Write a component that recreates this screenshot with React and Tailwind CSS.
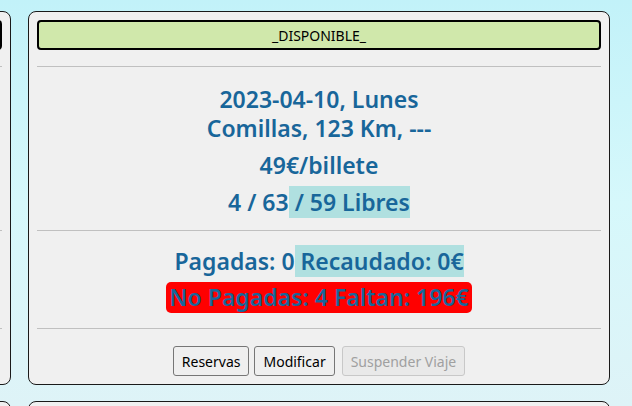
import React from "react";

const F = { fontFamily: '"Noto Sans", "Open Sans", sans-serif' };

function Card() {
  return (
    <div className="w-[582px] h-[374px] rounded-[8px] border border-[#1a1a1a] bg-[#f0f0f0] px-[8px] pt-[8px] flex flex-col">
      <div className="h-[30px] rounded-[4px] border-2 border-black bg-[#d0e8ab] flex items-center justify-center text-[14px] text-black">
        _DISPONIBLE_
      </div>
      <div className="mt-[16px] h-px bg-[#c0c0c0]" />
      <div className="mt-[18px] text-center text-[#18669a] font-semibold text-[23px] leading-[29px]">
        <div>2023-04-10, Lunes</div>
        <div>Comillas, 123 Km, ---</div>
      </div>
      <div className="mt-[8px] text-center text-[#18669a] font-semibold text-[23px] leading-[29px]">
        49€/billete
      </div>
      <div className="mt-[6px] flex justify-center text-[#18669a] font-semibold text-[23px] leading-[32px]">
        <span className="whitespace-pre">4 / 63</span>
        <span className="whitespace-pre bg-[#b0e0e0]"> / 59 Libres</span>
      </div>
      <div className="mt-[12px] h-px bg-[#c0c0c0]" />
      <div className="mt-[14px] flex justify-center text-[#18669a] font-semibold text-[23px] leading-[32px]">
        <span className="whitespace-pre">Pagadas: 0</span>
        <span className="whitespace-pre bg-[#b0e0e0]"> Recaudado: 0€</span>
      </div>
      <div className="mt-[5px] flex justify-center">
        <span className="bg-[#ff0000] rounded-[5px] px-[3px] h-[31px] flex items-center text-[#18669a] font-semibold text-[23px] whitespace-pre">
          No Pagadas: 4 Faltan: 196€
        </span>
      </div>
      <div className="mt-[15px] h-px bg-[#c0c0c0]" />
      <div className="mt-[17px] flex justify-center gap-[5px] text-[14px]">
        <button className="h-[30px] px-[8px] rounded-[3px] border border-[#767676] bg-[#efefef] text-black">Reservas</button>
        <button className="h-[30px] px-[8px] rounded-[3px] border border-[#767676] bg-[#efefef] text-black">Modificar</button>
        <button disabled className="ml-[2px] h-[30px] px-[8px] rounded-[3px] border border-[#c8c8c8] bg-[#e9e9e9] text-[#a0a0a0]">Suspender Viaje</button>
      </div>
    </div>
  );
}

export default function App() {
  return (
    <div style={F} className="w-[632px] h-[406px] overflow-hidden bg-gradient-to-b from-[#c2f2f9] via-[#d6f8fb] to-[#def3f7]">
      <div className="grid grid-cols-[582px_582px] gap-x-[17px] gap-y-[16px] ml-[-571px] pt-[11px]">
        <Card />
        <Card />
        <Card />
        <Card />
      </div>
    </div>
  );
}
